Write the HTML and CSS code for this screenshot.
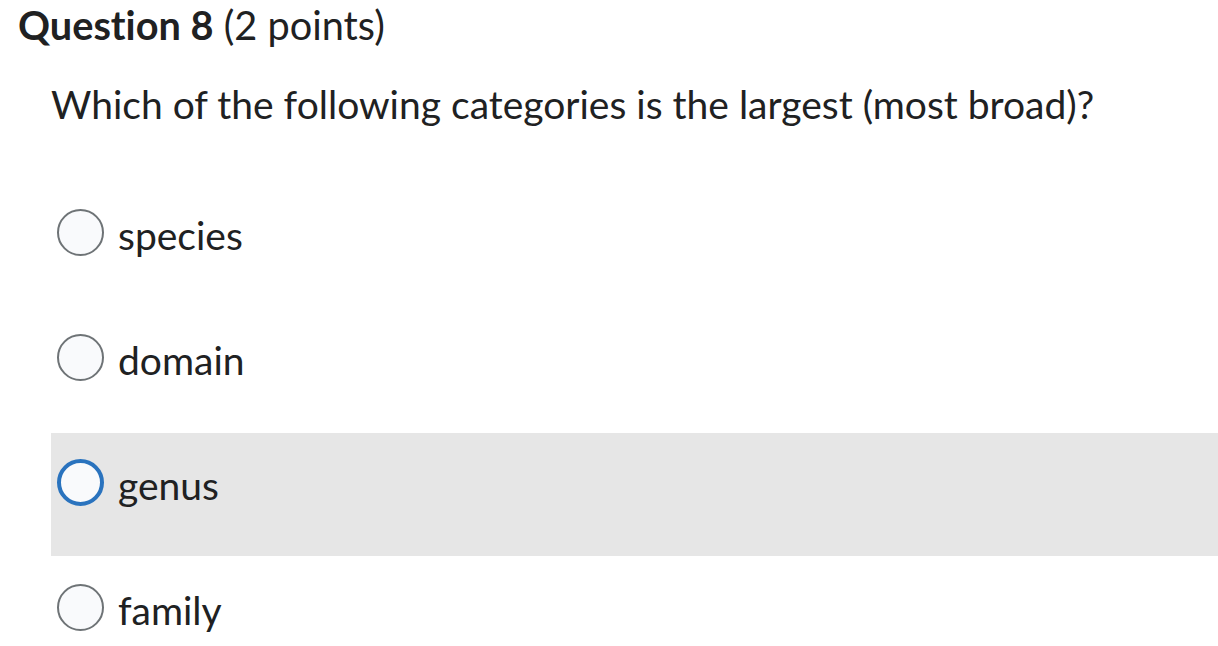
FILE: index.html
```html
<!DOCTYPE html>
<html lang="en">
<head>
<meta charset="utf-8">
<title>Question 8</title>
<link rel="stylesheet" href="styles.css">
</head>
<body>
<main class="page">
  <h2 class="q-title"><strong>Question 8</strong> <span class="pts">(2 points)</span></h2>
  <div class="q-body">
    <p class="q-text">Which of the following categories is the largest (most broad)?</p>
    <div class="options">
      <label class="option"><span class="radio"></span><span class="opt-label">species</span></label>
      <label class="option"><span class="radio"></span><span class="opt-label">domain</span></label>
      <label class="option option-hover"><span class="radio radio-focus"></span><span class="opt-label">genus</span></label>
      <label class="option"><span class="radio"></span><span class="opt-label">family</span></label>
    </div>
  </div>
</main>
</body>
</html>
```

FILE: styles.css
```css
html, body {
  margin: 0;
  padding: 0;
  background: #ffffff;
}
body {
  font-family: Lato, "Open Sans", sans-serif;
  font-variant-ligatures: none;
  color: #202122;
  width: 1218px;
  height: 646px;
  overflow: hidden;
}
.page {
  padding: 0 0 0 18px;
}
.q-title {
  margin: 0;
  padding-top: 1px;
  font-size: 39.7px;
  line-height: 47px;
  font-weight: 400;
}
.q-title strong {
  font-weight: 700;
}
.q-body {
  margin-left: 33px;
}
.q-text {
  margin: 0;
  padding-top: 33px;
  font-size: 39px;
  line-height: 47px;
}
.options {
  display: flex;
  flex-direction: column;
  gap: 2px;
  margin-top: 55px;
}
.option {
  display: flex;
  align-items: flex-start;
  padding: 26px 0 50px 6px;
}
.option:last-child {
  padding-bottom: 0;
}
.option-hover {
  background: #e6e6e6;
}
.radio {
  width: 47px;
  height: 47px;
  box-sizing: border-box;
  border-radius: 50%;
  border: 2px solid #6e7376;
  background: #f9fafc;
  flex: none;
}
.radio-focus {
  border: 4px solid #2a73be;
}
.opt-label {
  margin-left: 14px;
  padding-top: 6px;
  font-size: 39px;
  line-height: 41px;
}
```
